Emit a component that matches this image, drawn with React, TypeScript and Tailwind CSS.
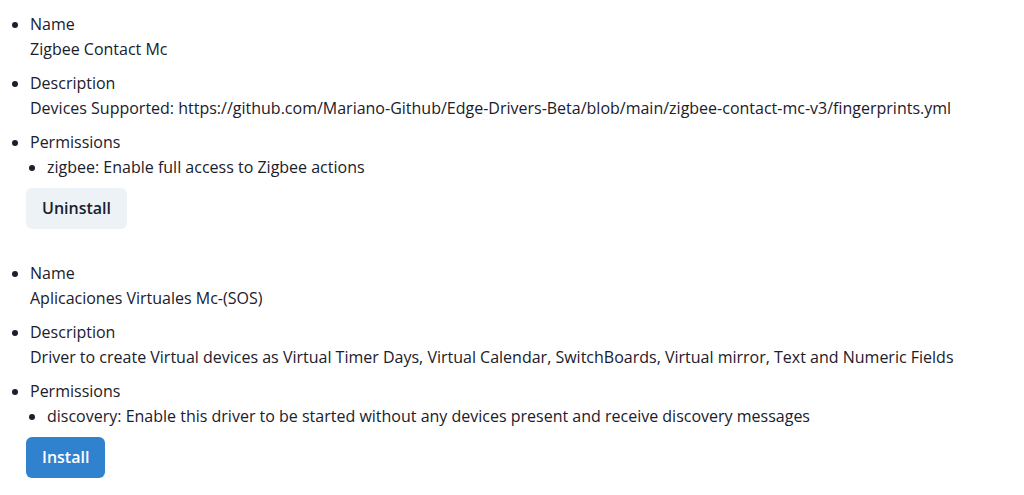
import React from 'react';

interface Driver {
  name: string;
  description: string;
  permissions: string[];
  installed: boolean;
}

const drivers: Driver[] = [
  {
    name: 'Zigbee Contact Mc',
    description:
      'Devices Supported: https://github.com/Mariano-Github/Edge-Drivers-Beta/blob/main/zigbee-contact-mc-v3/fingerprints.yml',
    permissions: ['zigbee: Enable full access to Zigbee actions'],
    installed: true,
  },
  {
    name: 'Aplicaciones Virtuales Mc-(SOS)',
    description:
      'Driver to create Virtual devices as Virtual Timer Days, Virtual Calendar, SwitchBoards, Virtual mirror, Text and Numeric Fields',
    permissions: [
      'discovery: Enable this driver to be started without any devices present and receive discovery messages',
    ],
    installed: false,
  },
];

const DriverItem: React.FC<{ driver: Driver }> = ({ driver }) => (
  <div className="mb-8">
    <ul className="list-disc pl-[30px] space-y-[9px]">
      <li>
        <div>Name</div>
        <div>{driver.name}</div>
      </li>
      <li>
        <div>Description</div>
        <div>{driver.description}</div>
      </li>
      <li>
        <div>Permissions</div>
        <ul className="list-disc pl-[17px]">
          {driver.permissions.map((p) => (
            <li key={p}>{p}</li>
          ))}
        </ul>
      </li>
    </ul>
    <div className="pl-[26px] mt-2">
      {driver.installed ? (
        <button className="h-[41px] px-4 rounded-md bg-[#edf2f7] text-[#1a202c] font-semibold">
          Uninstall
        </button>
      ) : (
        <button className="h-[41px] px-4 rounded-md bg-[#3182ce] text-white font-semibold">
          Install
        </button>
      )}
    </div>
  </div>
);

export default function App() {
  return (
    <div
      className="bg-white text-[#1a202c] text-base leading-[25px] pt-[12px] min-h-[495px]"
      style={{ fontFamily: '"Open Sans", sans-serif' }}
    >
      {drivers.map((d) => (
        <DriverItem key={d.name} driver={d} />
      ))}
    </div>
  );
}
